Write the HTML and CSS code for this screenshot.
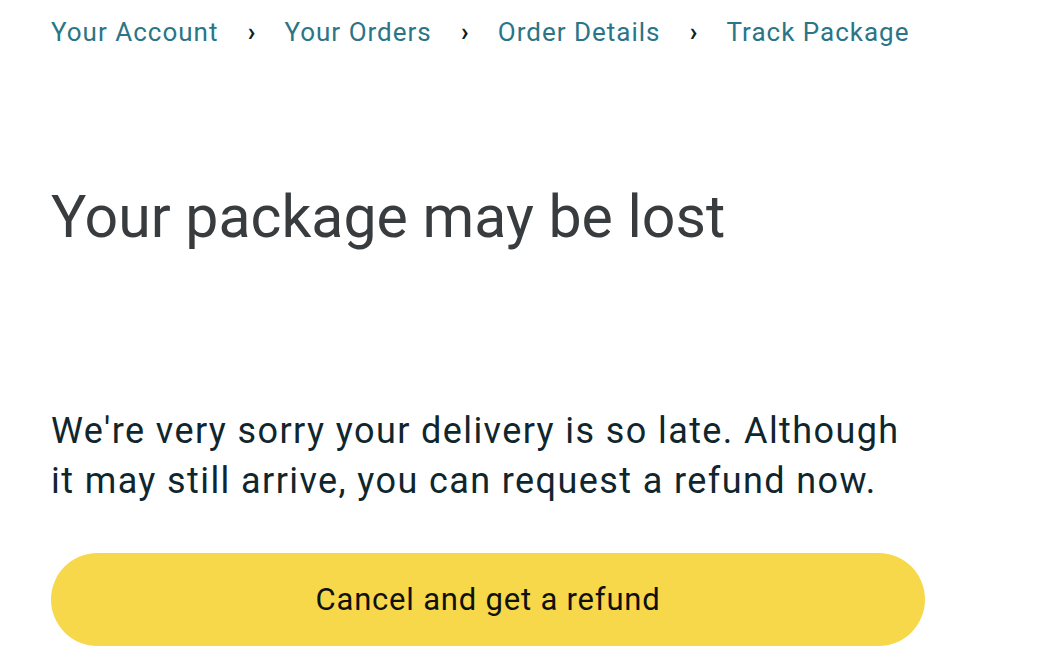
FILE: index.html
```html
<!DOCTYPE html>
<html lang="en">
<head>
<meta charset="utf-8">
<title>Track Package</title>
<link rel="stylesheet" href="styles.css">
</head>
<body>
<main class="page">
  <nav class="crumbs">
    <a class="crumb" href="#">Your Account</a>
    <span class="sep">›</span>
    <a class="crumb" href="#">Your Orders</a>
    <span class="sep">›</span>
    <a class="crumb" href="#">Order Details</a>
    <span class="sep">›</span>
    <a class="crumb" href="#">Track Package</a>
  </nav>
  <h1 class="title">Your package may be lost</h1>
  <p class="message">We're very sorry your delivery is so late. Although it may still arrive, you can request a refund now.</p>
  <button class="refund" type="button">Cancel and get a refund</button>
</main>
</body>
</html>
```
FILE: styles.css
```css
html, body {
  margin: 0;
  padding: 0;
  background: #ffffff;
}
body {
  font-family: "Roboto", "Open Sans", sans-serif;
}
.page {
  width: 874px;
  padding: 13px 0 0 51px;
  display: flex;
  flex-direction: column;
}
.crumbs {
  display: flex;
  align-items: center;
  height: 38px;
  font-size: 26px;
}
.crumb {
  color: #2a7587;
  text-decoration: none;
  letter-spacing: 1px;
}
.sep {
  color: #0f1f24;
  width: 66px;
  text-align: center;
  font-size: 25px;
  font-weight: 700;
}
.title {
  margin: 131px 0 0 0;
  font-size: 59px;
  line-height: 70px;
  font-weight: 400;
  color: #383c3e;
}
.message {
  margin: 154px 0 0 0;
  font-size: 36px;
  line-height: 50px;
  letter-spacing: 1.4px;
  color: #10262e;
  width: 870px;
}
.refund {
  margin-top: 47px;
  width: 874px;
  height: 93px;
  border: none;
  border-radius: 47px;
  background: #f6d84a;
  color: #0f1111;
  font-family: inherit;
  font-size: 31px;
  letter-spacing: 0.8px;
  cursor: pointer;
}
```
